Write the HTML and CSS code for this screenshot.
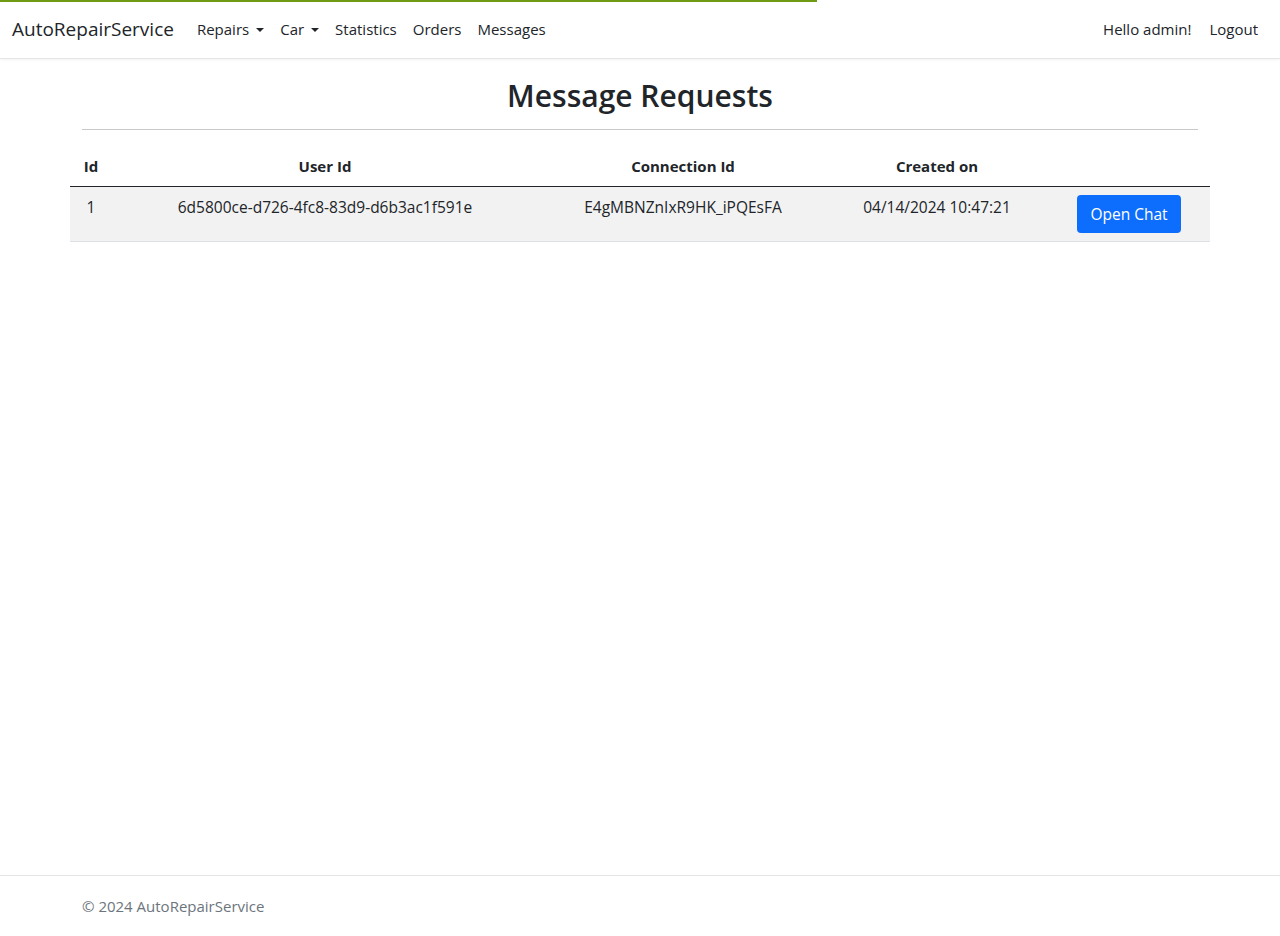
FILE: index.html
```html
<!DOCTYPE html>
<html lang="en">
<head>
<meta charset="utf-8">
<title>Message Requests - AutoRepairService</title>
<link rel="stylesheet" href="styles.css">
</head>
<body>
<div class="progress-line"></div>
<header class="navbar">
  <a class="brand" href="#">AutoRepairService</a>
  <nav class="nav-main">
    <a class="nav-link dropdown" href="#">Repairs</a>
    <a class="nav-link dropdown" href="#">Car</a>
    <a class="nav-link" href="#">Statistics</a>
    <a class="nav-link" href="#">Orders</a>
    <a class="nav-link" href="#">Messages</a>
  </nav>
  <nav class="nav-user">
    <span class="nav-link">Hello admin!</span>
    <a class="nav-link" href="#">Logout</a>
  </nav>
</header>
<main class="container">
  <h2 class="title">Message Requests</h2>
  <hr class="rule">
  <div class="table-wrap">
    <table class="requests">
      <colgroup>
        <col class="c-id"><col class="c-user"><col class="c-conn"><col class="c-date"><col class="c-act">
      </colgroup>
      <thead>
        <tr><th>Id</th><th>User Id</th><th>Connection Id</th><th>Created on</th><th></th></tr>
      </thead>
      <tbody>
        <tr>
          <td>1</td>
          <td>6d5800ce-d726-4fc8-83d9-d6b3ac1f591e</td>
          <td>E4gMBNZnIxR9HK_iPQEsFA</td>
          <td>04/14/2024 10:47:21</td>
          <td><a class="btn" href="#">Open Chat</a></td>
        </tr>
      </tbody>
    </table>
  </div>
</main>
<footer class="footer">
  <div class="footer-inner">&copy; 2024 AutoRepairService</div>
</footer>
</body>
</html>
```
FILE: styles.css
```css
* { box-sizing: border-box; }
html, body { height: 100%; }
body {
  margin: 0;
  font-family: "Open Sans", "Noto Sans", "Liberation Sans", sans-serif;
  font-size: 15px;
  line-height: 24px;
  color: #212529;
  background: #fff;
  display: flex;
  flex-direction: column;
  min-height: 100vh;
}
a { text-decoration: none; color: inherit; }
.progress-line {
  position: absolute;
  top: 0; left: 0;
  width: 817px;
  height: 2px;
  background: #6f9a14;
  z-index: 5;
}
.navbar {
  display: flex;
  align-items: center;
  height: 59px;
  padding: 0 12px;
  border-bottom: 1px solid #e5e5e5;
  box-shadow: 0 1px 3px rgba(0,0,0,.05);
}
.brand {
  font-size: 19px;
  color: #212529;
  margin-right: 15px;
}
.nav-main, .nav-user { display: flex; align-items: center; }
.nav-user { margin-left: auto; }
.nav-link {
  padding: 8px;
  color: #212529;
}
.nav-user .nav-link:last-child { padding-right: 10px; }
.nav-user .nav-link:first-child { margin-right: 2px; }
.dropdown::after {
  content: "";
  display: inline-block;
  margin-left: 7px;
  vertical-align: 3px;
  border-top: 4px solid #212529;
  border-left: 4px solid transparent;
  border-right: 4px solid transparent;
}
.container {
  width: 1140px;
  margin: 0 auto;
  padding: 0 12px;
  flex: 1;
}
.title {
  margin: 17px 0 0;
  text-align: center;
  font-size: 30px;
  font-weight: 600;
  line-height: 40px;
}
.rule {
  margin: 13px 0 16px;
  border: 0;
  border-top: 1px solid #c8c8c8;
}
.table-wrap { margin: 0 -12px; }
.requests {
  width: 100%;
  border-collapse: collapse;
  table-layout: fixed;
}
.c-id { width: 42px; }
.c-user { width: 426px; }
.c-conn { width: 290px; }
.c-date { width: 218px; }
.c-act { width: 164px; }
.requests th {
  padding: 8px;
  font-weight: 700;
  text-align: center;
  border-bottom: 1px solid #212529;
}
.requests td {
  padding: 8px;
  text-align: center;
  vertical-align: top;
  font-size: 15.5px;
  background: #f2f2f2;
  border-bottom: 1px solid #dee2e6;
}
.btn {
  display: inline-block;
  padding: 7px 13px;
  background: #0d6efd;
  color: #fff;
  border-radius: 4px;
  line-height: 24px;
  margin-left: 2px;
}
.footer {
  border-top: 1px solid #e5e5e5;
  height: 61px;
  color: #6c757d;
}
.footer-inner {
  width: 1140px;
  margin: 0 auto;
  padding: 0 12px;
  line-height: 60px;
}
```
